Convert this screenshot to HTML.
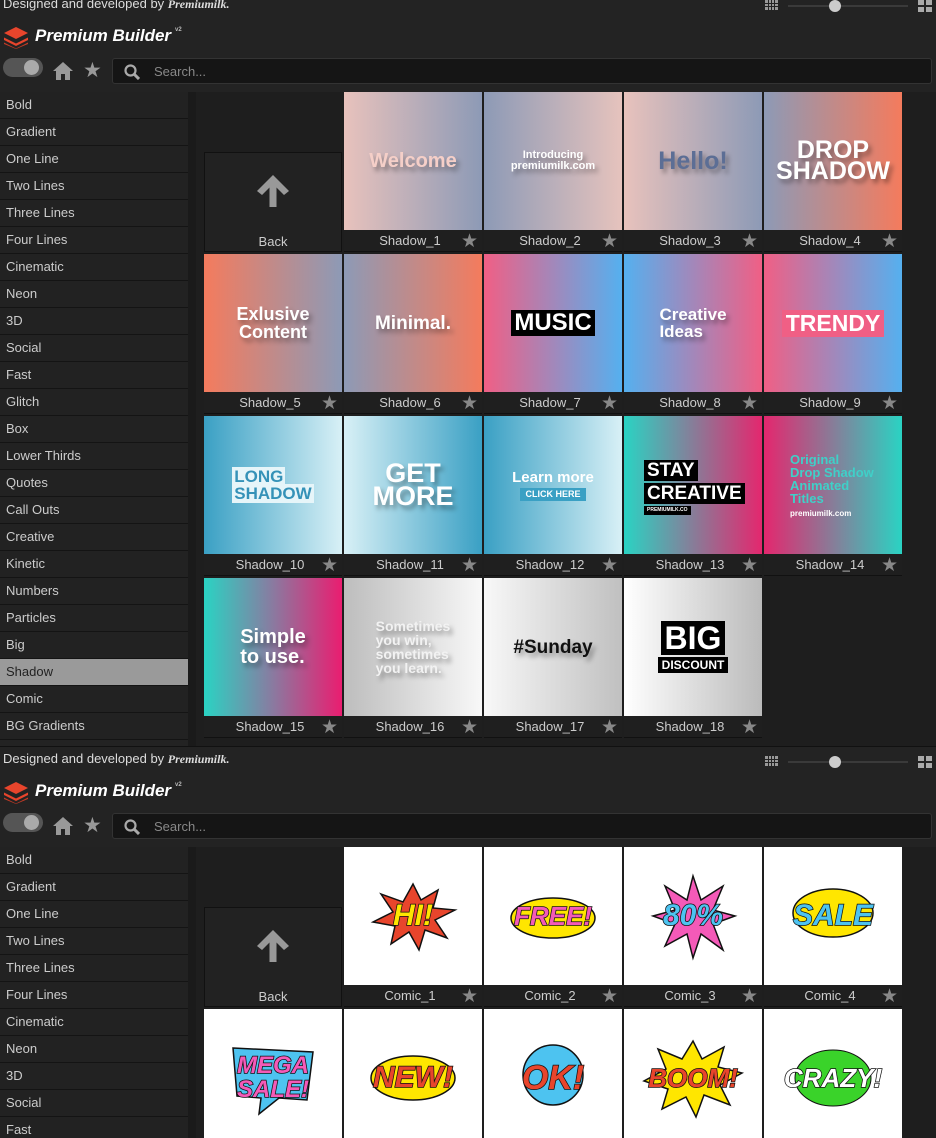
<!DOCTYPE html>
<html><head><meta charset="utf-8"><style>
*{margin:0;padding:0;box-sizing:border-box}
html,body{width:936px;height:1138px;overflow:hidden}
body{background:#232323;font-family:"Liberation Sans",sans-serif;position:relative}
.p{position:absolute;left:0;width:936px;height:754px;background:#232323;overflow:hidden}
.cr{position:absolute;left:3px;top:4px;font-size:13px;color:#ddd}
.cr i{font-family:"Liberation Serif",serif;font-weight:bold;font-size:12px}
.logo{position:absolute;left:4px;top:35px}
.brand{position:absolute;left:35px;top:34px;font-size:17px;font-weight:bold;font-style:italic;color:#fff}
.brand sup{font-size:6px;color:#bbb;vertical-align:10px;margin-left:4px;font-style:normal}
.tog{position:absolute;left:3px;top:66px;width:40px;height:19px;border-radius:10px;background:#555}
.tog:after{content:"";position:absolute;right:4px;top:2px;width:15px;height:15px;border-radius:50%;background:#aaa}
.search{position:absolute;left:112px;top:66px;width:820px;height:26px;background:#151515;border:1px solid #333;border-radius:3px}
.search span{position:absolute;left:41px;top:5px;font-size:13px;color:#888}
.side{position:absolute;left:0;top:100px;width:188px}
.side div{height:27px;border-bottom:1px solid #141414;color:#ccc;font-size:13px;line-height:26px;padding-left:6px;background:#222}
.side div.sel{background:#9a9a9a;color:#222}
.sb{position:absolute;left:188px;top:100px;width:8px;height:654px;background:#1a1a1a}
.grid{position:absolute;left:196px;top:100px;width:740px;height:654px;background:#1e1e1e}
.t{position:absolute;width:138px;height:160px;background:#1f1f1f;border-bottom:1px solid #111}
.im{position:absolute;left:0;top:0;width:138px;height:138px;overflow:hidden;display:flex;align-items:center;justify-content:center;text-align:center;font-weight:bold;line-height:1}
.lb{position:absolute;left:0;top:138px;width:138px;height:22px;color:#ccc;font-size:13px;line-height:22px;text-align:center;padding-right:6px}
.st{position:absolute;right:4px;top:140px;color:#888;font-size:19px;line-height:19px}
.back{position:absolute;left:8px;top:60px;width:138px;height:100px;background:#222;border:1px solid #111}
.back b{position:absolute;left:0;width:136px;top:81px;text-align:center;color:#ccc;font-size:13px;font-weight:normal}
.ts{text-shadow:3px 4px 5px rgba(0,0,0,.35)}
.cm{font-family:"Liberation Sans",sans-serif;font-weight:bold;font-style:italic;font-size:30px;-webkit-text-stroke:1.5px #111;paint-order:stroke fill}
</style></head><body>

<!-- PANEL 1 -->
<div class="p" style="top:-8px">
<div class="cr">Designed and developed by <i>Premiumilk.</i></div>
<svg style="position:absolute;left:765px;top:8px" width="13" height="10"><rect width="13" height="10" fill="#999"/><path d="M3.5 0V10M6.5 0V10M9.5 0V10M0 3.5H13M0 6.5H13" stroke="#232323"/></svg>
<div style="position:absolute;left:788px;top:13px;width:120px;height:2px;background:#3a3a3a"></div>
<div style="position:absolute;left:829px;top:8px;width:12px;height:12px;border-radius:50%;background:#ccc"></div>
<svg style="position:absolute;left:918px;top:8px" width="14" height="12"><g fill="#aaa"><rect width="6" height="5"/><rect x="8" width="6" height="5"/><rect y="7" width="6" height="5"/><rect x="8" y="7" width="6" height="5"/></g></svg>
<svg class="logo" width="24" height="22" viewBox="0 0 24 22"><path d="M12 0L24 6 12 12 0 6Z" fill="#e8452c"/><path d="M0 10.5L12 16.5 24 10.5 24 13 12 19 0 13Z" fill="#e8452c"/><path d="M0 15.5L12 21.5 24 15.5 24 17 12 22 0 17Z" fill="#c33a25"/></svg>
<div class="brand">Premium Builder<sup>v2</sup></div>
<div class="tog"></div>
<svg style="position:absolute;left:53px;top:70px" width="20" height="18" viewBox="0 0 20 18"><path d="M10 0L20 9H17V18H12V12H8V18H3V9H0Z" fill="#999"/></svg>
<div style="position:absolute;left:83px;top:66px;color:#999;font-size:21px">★</div>
<div class="search"><svg style="position:absolute;left:11px;top:5px" width="16" height="16"><circle cx="6.5" cy="6.5" r="5" stroke="#aaa" stroke-width="2.2" fill="none"/><path d="M10 10L15 15" stroke="#aaa" stroke-width="3"/></svg><span>Search...</span></div>
<div class="side">
<div>Bold</div><div>Gradient</div><div>One Line</div><div>Two Lines</div><div>Three Lines</div><div>Four Lines</div><div>Cinematic</div><div>Neon</div><div>3D</div><div>Social</div><div>Fast</div><div>Glitch</div><div>Box</div><div>Lower Thirds</div><div>Quotes</div><div>Call Outs</div><div>Creative</div><div>Kinetic</div><div>Numbers</div><div>Particles</div><div>Big</div><div class="sel">Shadow</div><div>Comic</div><div>BG Gradients</div>
</div>
<div class="sb"></div>
<div class="grid">
<div class="back"><svg style="position:absolute;left:50px;top:20px" width="36" height="36" viewBox="0 0 36 36"><path d="M18 2L34 18 29 22 21.5 14.5V34H14.5V14.5L7 22 2 18Z" fill="#999"/></svg><b>Back</b></div>

<div class="t" style="left:148px;top:0"><div class="im ts" style="background:linear-gradient(90deg,#e8c2bc,#8d9ab6);color:#f5cfc8;font-size:20px">Welcome</div><div class="lb">Shadow_1</div><div class="st">★</div></div>
<div class="t" style="left:288px;top:0"><div class="im ts" style="background:linear-gradient(90deg,#8d9ab6,#e6c3bd);color:#fff;font-size:11px">Introducing<br>premiumilk.com</div><div class="lb">Shadow_2</div><div class="st">★</div></div>
<div class="t" style="left:428px;top:0"><div class="im ts" style="background:linear-gradient(90deg,#e8c2bc,#8d9ab6);color:#5c6e95;font-size:25px">Hello!</div><div class="lb">Shadow_3</div><div class="st">★</div></div>
<div class="t" style="left:568px;top:0"><div class="im ts" style="background:linear-gradient(90deg,#8d9ab6,#f47b5d);color:#fff;font-size:25px;line-height:.85">DROP<br>SHADOW</div><div class="lb">Shadow_4</div><div class="st">★</div></div>

<div class="t" style="left:8px;top:162px"><div class="im ts" style="background:linear-gradient(90deg,#f47b5d,#8d9ab6);color:#fff;font-size:18px">Exlusive<br>Content</div><div class="lb">Shadow_5</div><div class="st">★</div></div>
<div class="t" style="left:148px;top:162px"><div class="im ts" style="background:linear-gradient(90deg,#8d9ab6,#f47b5d);color:#fff;font-size:19px">Minimal.</div><div class="lb">Shadow_6</div><div class="st">★</div></div>
<div class="t" style="left:288px;top:162px"><div class="im" style="background:linear-gradient(90deg,#f05f85,#55b0ef)"><span style="background:#000;color:#fff;font-size:24px;padding:1px 3px">MUSIC</span></div><div class="lb">Shadow_7</div><div class="st">★</div></div>
<div class="t" style="left:428px;top:162px"><div class="im ts" style="background:linear-gradient(90deg,#55b0ef,#f05f85);color:#fff;font-size:17px;text-align:left">Creative<br>Ideas</div><div class="lb">Shadow_8</div><div class="st">★</div></div>
<div class="t" style="left:568px;top:162px"><div class="im" style="background:linear-gradient(90deg,#f05f85,#55b0ef)"><span style="background:#f05f85;color:#fff;font-size:23px;padding:2px 4px">TRENDY</span></div><div class="lb">Shadow_9</div><div class="st">★</div></div>

<div class="t" style="left:8px;top:324px"><div class="im" style="background:linear-gradient(90deg,#3aa0c4,#d8f0f6);color:#3592b8;font-size:17px;text-align:left"><span><span style="background:#e6f5f9;padding:0 2px">LONG</span><br><span style="background:#e6f5f9;padding:0 2px">SHADOW</span></span></div><div class="lb">Shadow_10</div><div class="st">★</div></div>
<div class="t" style="left:148px;top:324px"><div class="im ts" style="background:linear-gradient(90deg,#d8f0f6,#3aa0c4);color:#fff;font-size:27px;line-height:.85">GET<br>MORE</div><div class="lb">Shadow_11</div><div class="st">★</div></div>
<div class="t" style="left:288px;top:324px"><div class="im" style="background:linear-gradient(90deg,#3aa0c4,#d8f0f6);color:#fff;font-size:15px;flex-direction:column">Learn more<span style="background:#3aa0c4;font-size:9px;padding:2px 5px;margin-top:3px">CLICK HERE</span></div><div class="lb">Shadow_12</div><div class="st">★</div></div>
<div class="t" style="left:428px;top:324px"><div class="im" style="background:linear-gradient(90deg,#2ad3c3,#e4276e);color:#fff;font-size:19px;align-items:flex-start;justify-content:flex-start;padding:44px 0 0 20px;flex-direction:column;text-align:left"><span style="background:#000;padding:1px 3px">STAY</span><span style="background:#000;padding:1px 3px;margin-top:2px">CREATIVE</span><span style="background:#000;font-size:5px;padding:2px 3px;margin-top:2px">PREMIUMILK.CO</span></div><div class="lb">Shadow_13</div><div class="st">★</div></div>
<div class="t" style="left:568px;top:324px"><div class="im" style="background:linear-gradient(90deg,#e4276e,#2ad3c3);color:#3fd0c8;font-size:13px;text-align:left;justify-content:flex-start;padding-left:26px"><span>Original<br>Drop Shadow<br>Animated<br>Titles<br><span style="color:#fff;font-size:8px">premiumilk.com</span></span></div><div class="lb">Shadow_14</div><div class="st">★</div></div>

<div class="t" style="left:8px;top:486px"><div class="im ts" style="background:linear-gradient(90deg,#2ad3c3,#8a7aa0,#ea1d70);color:#fff;font-size:20px;text-align:left">Simple<br>to use.</div><div class="lb">Shadow_15</div><div class="st">★</div></div>
<div class="t" style="left:148px;top:486px"><div class="im ts" style="background:linear-gradient(90deg,#bdbdbd,#f8f8f8);color:#f2f2f2;font-size:14px;text-align:left">Sometimes<br>you win,<br>sometimes<br>you learn.</div><div class="lb">Shadow_16</div><div class="st">★</div></div>
<div class="t" style="left:288px;top:486px"><div class="im ts" style="background:linear-gradient(90deg,#f8f8f8,#c0c0c0);color:#111;font-size:19px">#Sunday</div><div class="lb">Shadow_17</div><div class="st">★</div></div>
<div class="t" style="left:428px;top:486px"><div class="im" style="background:linear-gradient(90deg,#fff,#bbb);flex-direction:column"><span style="background:#000;color:#fff;font-size:32px;padding:1px 4px">BIG</span><span style="background:#000;color:#fff;font-size:12px;padding:2px 4px;margin-top:2px">DISCOUNT</span></div><div class="lb">Shadow_18</div><div class="st">★</div></div>
</div>
</div>

<!-- PANEL 2 -->
<div class="p" style="top:746px;height:392px;border-top:1px solid #111">
<div class="cr">Designed and developed by <i>Premiumilk.</i></div>
<svg style="position:absolute;left:765px;top:9px" width="13" height="10"><rect width="13" height="10" fill="#999"/><path d="M3.5 0V10M6.5 0V10M9.5 0V10M0 3.5H13M0 6.5H13" stroke="#232323"/></svg>
<div style="position:absolute;left:788px;top:14px;width:120px;height:2px;background:#3a3a3a"></div>
<div style="position:absolute;left:829px;top:9px;width:12px;height:12px;border-radius:50%;background:#ccc"></div>
<svg style="position:absolute;left:918px;top:9px" width="14" height="12"><g fill="#aaa"><rect width="6" height="5"/><rect x="8" width="6" height="5"/><rect y="7" width="6" height="5"/><rect x="8" y="7" width="6" height="5"/></g></svg>
<svg class="logo" width="24" height="22" viewBox="0 0 24 22"><path d="M12 0L24 6 12 12 0 6Z" fill="#e8452c"/><path d="M0 10.5L12 16.5 24 10.5 24 13 12 19 0 13Z" fill="#e8452c"/><path d="M0 15.5L12 21.5 24 15.5 24 17 12 22 0 17Z" fill="#c33a25"/></svg>
<div class="brand">Premium Builder<sup>v2</sup></div>
<div class="tog"></div>
<svg style="position:absolute;left:53px;top:70px" width="20" height="18" viewBox="0 0 20 18"><path d="M10 0L20 9H17V18H12V12H8V18H3V9H0Z" fill="#999"/></svg>
<div style="position:absolute;left:83px;top:66px;color:#999;font-size:21px">★</div>
<div class="search"><svg style="position:absolute;left:11px;top:5px" width="16" height="16"><circle cx="6.5" cy="6.5" r="5" stroke="#aaa" stroke-width="2.2" fill="none"/><path d="M10 10L15 15" stroke="#aaa" stroke-width="3"/></svg><span>Search...</span></div>
<div class="side">
<div>Bold</div><div>Gradient</div><div>One Line</div><div>Two Lines</div><div>Three Lines</div><div>Four Lines</div><div>Cinematic</div><div>Neon</div><div>3D</div><div>Social</div><div>Fast</div>
</div>
<div class="sb"></div>
<div class="grid">
<div class="back"><svg style="position:absolute;left:50px;top:20px" width="36" height="36" viewBox="0 0 36 36"><path d="M18 2L34 18 29 22 21.5 14.5V34H14.5V14.5L7 22 2 18Z" fill="#999"/></svg><b>Back</b></div>

<div class="t" style="left:148px;top:0"><div class="im" style="background:#fff"><svg width="100" height="80" viewBox="0 0 100 80" style="position:absolute"><path d="M50 8L58 24 75 14 70 32 92 34 72 44 84 62 62 54 56 74 46 56 28 68 32 50 10 46 30 36 18 18 40 26Z" fill="#e8452c" stroke="#111" stroke-width="1.5"/></svg><span class="cm" style="color:#ffe600;position:relative">HI!</span></div><div class="lb">Comic_1</div><div class="st">★</div></div>
<div class="t" style="left:288px;top:0"><div class="im" style="background:#fff"><svg width="110" height="60" viewBox="0 0 110 60" style="position:absolute"><ellipse cx="55" cy="32" rx="42" ry="20" fill="#ffe600" stroke="#111" stroke-width="1.5"/></svg><span class="cm" style="color:#f45ab8;position:relative;font-size:26px">FREE!</span></div><div class="lb">Comic_2</div><div class="st">★</div></div>
<div class="t" style="left:428px;top:0"><div class="im" style="background:#fff"><svg width="100" height="100" viewBox="0 0 100 100" style="position:absolute"><path d="M50 10L58 34 80 20 70 44 92 50 70 58 80 84 58 68 50 92 44 68 22 80 32 58 10 50 32 44 22 20 44 34Z" fill="#f45ab8" stroke="#111" stroke-width="1.5"/></svg><span class="cm" style="color:#4dc3f0;position:relative">80%</span></div><div class="lb">Comic_3</div><div class="st">★</div></div>
<div class="t" style="left:568px;top:0"><div class="im" style="background:#fff"><svg width="100" height="70" viewBox="0 0 100 70" style="position:absolute"><ellipse cx="50" cy="32" rx="40" ry="24" fill="#ffe600" stroke="#111" stroke-width="1.5"/></svg><span class="cm" style="color:#4dc3f0;position:relative">SALE</span></div><div class="lb">Comic_4</div><div class="st">★</div></div>

<div class="t" style="left:8px;top:162px"><div class="im" style="background:#fff"><svg width="100" height="80" viewBox="0 0 100 80" style="position:absolute"><path d="M10 10L90 14 84 62 56 60 36 76 38 60 14 58Z" fill="#4dc3f0" stroke="#111" stroke-width="1.5"/></svg><span class="cm" style="color:#f45ab8;position:relative;font-size:24px">MEGA<br>SALE!</span></div><div class="lb">Comic_5</div><div class="st">★</div></div>
<div class="t" style="left:148px;top:162px"><div class="im" style="background:#fff"><svg width="100" height="60" viewBox="0 0 100 60" style="position:absolute"><ellipse cx="50" cy="30" rx="42" ry="22" fill="#ffe600" stroke="#111" stroke-width="1.5"/></svg><span class="cm" style="color:#e8452c;position:relative">NEW!</span></div><div class="lb">Comic_6</div><div class="st">★</div></div>
<div class="t" style="left:288px;top:162px"><div class="im" style="background:#fff"><svg width="100" height="90" viewBox="0 0 100 90" style="position:absolute"><circle cx="50" cy="42" r="30" fill="#4dc3f0" stroke="#111" stroke-width="1.5"/></svg><span class="cm" style="color:#e8452c;position:relative;font-size:34px">OK!</span></div><div class="lb">Comic_7</div><div class="st">★</div></div>
<div class="t" style="left:428px;top:162px"><div class="im" style="background:#fff"><svg width="110" height="90" viewBox="0 0 110 90" style="position:absolute"><path d="M55 8L64 26 86 14 80 34 104 40 82 52 92 72 66 62 58 84 48 64 24 76 30 56 6 48 28 36 20 16 44 26Z" fill="#ffe600" stroke="#111" stroke-width="1.5"/></svg><span class="cm" style="color:#e8452c;position:relative;font-size:26px">BOOM!</span></div><div class="lb">Comic_8</div><div class="st">★</div></div>
<div class="t" style="left:568px;top:162px"><div class="im" style="background:#fff"><svg width="100" height="80" viewBox="0 0 100 80" style="position:absolute"><ellipse cx="50" cy="40" rx="38" ry="28" fill="#3ad32a" stroke="#111" stroke-width="1"/></svg><span class="cm" style="color:#fff;position:relative;font-size:26px">CRAZY!</span></div><div class="lb">Comic_9</div><div class="st">★</div></div>
</div>
</div>
</body></html>
